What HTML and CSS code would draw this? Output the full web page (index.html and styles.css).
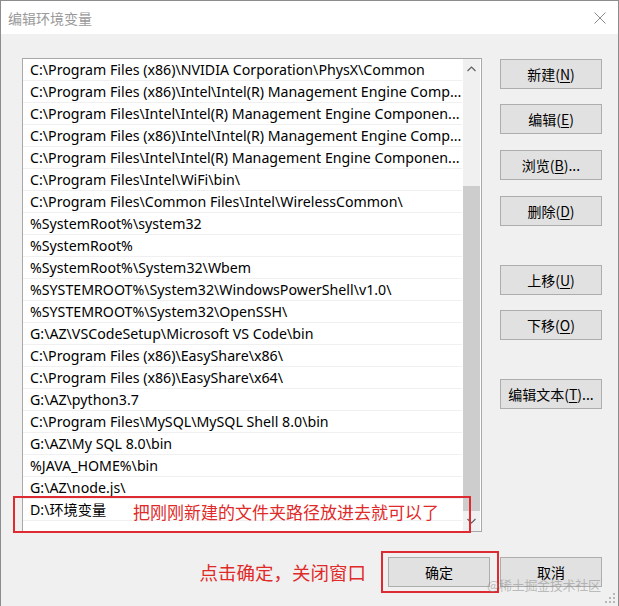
FILE: index.html
```html
<!DOCTYPE html>
<html lang="zh-CN">
<head>
<meta charset="utf-8">
<title>编辑环境变量</title>
<link rel="stylesheet" href="styles.css">
</head>
<body>
<div class="window">
  <div class="titlebar">
    <span class="title">编辑环境变量</span>
    <svg class="close" width="12" height="12" viewBox="0 0 12 12"><path d="M0.5 0.5 L11.5 11.5 M11.5 0.5 L0.5 11.5" stroke="#8a8a8a" stroke-width="1" fill="none"/></svg>
  </div>
  <div class="body">
    <div class="main">
      <div class="listbox">
        <ul class="list">
          <li>C:\Program Files (x86)\NVIDIA Corporation\PhysX\Common</li>
          <li>C:\Program Files (x86)\Intel\Intel(R) Management Engine Comp...</li>
          <li>C:\Program Files\Intel\Intel(R) Management Engine Componen...</li>
          <li>C:\Program Files (x86)\Intel\Intel(R) Management Engine Comp...</li>
          <li>C:\Program Files\Intel\Intel(R) Management Engine Componen...</li>
          <li>C:\Program Files\Intel\WiFi\bin\</li>
          <li>C:\Program Files\Common Files\Intel\WirelessCommon\</li>
          <li>%SystemRoot%\system32</li>
          <li>%SystemRoot%</li>
          <li>%SystemRoot%\System32\Wbem</li>
          <li>%SYSTEMROOT%\System32\WindowsPowerShell\v1.0\</li>
          <li>%SYSTEMROOT%\System32\OpenSSH\</li>
          <li>G:\AZ\VSCodeSetup\Microsoft VS Code\bin</li>
          <li>C:\Program Files (x86)\EasyShare\x86\</li>
          <li>C:\Program Files (x86)\EasyShare\x64\</li>
          <li>G:\AZ\python3.7</li>
          <li>C:\Program Files\MySQL\MySQL Shell 8.0\bin</li>
          <li>G:\AZ\My SQL 8.0\bin</li>
          <li>%JAVA_HOME%\bin</li>
          <li>G:\AZ\node.js\</li>
          <li>D:\环境变量</li>
          <li></li>
        </ul>
        <div class="scrollbar">
          <div class="arrow">
            <svg width="9" height="6" viewBox="0 0 9 6"><path d="M0.5 5 L4.5 1 L8.5 5" stroke="#606060" stroke-width="1.2" fill="none"/></svg>
          </div>
          <div class="track"><div class="thumb"></div></div>
          <div class="arrow">
            <svg width="9" height="6" viewBox="0 0 9 6"><path d="M0.5 1 L4.5 5 L8.5 1" stroke="#606060" stroke-width="1.2" fill="none"/></svg>
          </div>
        </div>
      </div>
      <div class="side">
        <button class="btn b-new">新建(<u>N</u>)</button>
        <button class="btn b-edit">编辑(<u>E</u>)</button>
        <button class="btn b-browse">浏览(<u>B</u>)...</button>
        <button class="btn b-del">删除(<u>D</u>)</button>
        <button class="btn b-up">上移(<u>U</u>)</button>
        <button class="btn b-down">下移(<u>O</u>)</button>
        <button class="btn b-text">编辑文本(<u>T</u>)...</button>
      </div>
    </div>
    <div class="footer">
      <span class="note note-ok">点击确定，关闭窗口</span>
      <button class="btn b-ok">确定</button>
      <button class="btn b-cancel">取消</button>
    </div>
  </div>

  <div class="mark mark-row"></div>
  <span class="note note-row">把刚刚新建的文件夹路径放进去就可以了</span>
  <div class="mark mark-ok"></div>
  <span class="watermark">@稀土掘金技术社区</span>
  <svg class="grip" width="12" height="12" viewBox="0 0 12 12">
    <rect x="9" y="1" width="2" height="2" fill="#b8b8b8"/>
    <rect x="5" y="5" width="2" height="2" fill="#b8b8b8"/>
    <rect x="9" y="5" width="2" height="2" fill="#b8b8b8"/>
    <rect x="1" y="9" width="2" height="2" fill="#b8b8b8"/>
    <rect x="5" y="9" width="2" height="2" fill="#b8b8b8"/>
    <rect x="9" y="9" width="2" height="2" fill="#b8b8b8"/>
  </svg>
</div>
</body>
</html>
```

FILE: styles.css
```css
* { box-sizing: border-box; }
html, body { margin: 0; padding: 0; background: #f0f0f0; }
body {
  font-family: "Noto Sans", "Noto Sans CJK SC", sans-serif;
  color: #000;
}
.window {
  position: relative;
  width: 619px;
  height: 606px;
  border: 1px solid #8c8c8c;
  border-bottom: none;
  background: #f0f0f0;
  overflow: hidden;
}
.titlebar {
  height: 33px;
  background: #fff;
  display: flex;
  align-items: center;
  justify-content: space-between;
  padding: 0 12px 0 7px;
}
.title {
  font-family: "Noto Sans CJK SC", sans-serif;
  font-size: 14px;
  color: #9a9a9a;
}
.close { display: block; }
.body {
  padding: 24px 16px 0 21px;
}
.main {
  display: flex;
  gap: 18px;
}
.listbox {
  width: 460px;
  height: 474px;
  border: 1px solid #a8a8a8;
  background: #fff;
  display: flex;
}
.list {
  list-style: none;
  margin: 0;
  padding: 0;
  width: 439px;
  overflow: hidden;
  font-size: 14.2px;
}
.list li {
  height: 22px;
  line-height: 22px;
  padding-left: 7px;
  border-bottom: 1px solid #f0f0f0;
  white-space: nowrap;
  font-family: "Noto Sans", "Noto Sans CJK SC", sans-serif;
}
.scrollbar {
  width: 17px;
  margin-left: 1px;
  background: #f0f0f0;
  display: flex;
  flex-direction: column;
}
.arrow {
  height: 20px;
  display: flex;
  align-items: center;
  justify-content: center;
}
.arrow svg { display: block; }
.track {
  flex: 1;
  padding-top: 107px;
}
.thumb {
  height: 325px;
  background: #cdcdcd;
}
.side {
  width: 102px;
  display: flex;
  flex-direction: column;
  padding-top: 1px;
}
.btn {
  height: 30px;
  width: 102px;
  background: #e1e1e1;
  border: 1px solid #adadad;
  font-family: "Noto Sans CJK SC", sans-serif;
  font-size: 14px;
  color: #000;
  padding: 0;
  margin: 0;
  line-height: 28px;
}
.btn u { text-underline-offset: 2px; }
.b-edit, .b-down { margin-top: 15px; }
.b-browse, .b-del { margin-top: 16px; }
.b-up, .b-text { margin-top: 39px; }
.footer {
  display: flex;
  justify-content: flex-end;
  align-items: center;
  margin-top: 25px;
}
.note {
  font-family: "Noto Sans CJK SC", sans-serif;
  color: #e02a2a;
  white-space: nowrap;
}
.note-ok {
  font-size: 18.5px;
  margin-right: 22px;
}
.b-cancel { margin-left: 10px; }
.mark {
  position: absolute;
  border: 2px solid #de2b31;
}
.mark-row { left: 12px; top: 495px; width: 458px; height: 37px; }
.mark-ok { left: 380px; top: 550px; width: 118px; height: 42px; }
.note-row {
  position: absolute;
  left: 132px;
  top: 500px;
  font-size: 17px;
  line-height: 22px;
}
.watermark {
  position: absolute;
  left: 486px;
  top: 574px;
  font-family: "Noto Sans CJK SC", sans-serif;
  font-size: 13px;
  color: rgba(140, 140, 140, 0.55);
  white-space: nowrap;
  letter-spacing: -0.3px;
}
.grip { position: absolute; right: 2px; bottom: 2px; }
```
